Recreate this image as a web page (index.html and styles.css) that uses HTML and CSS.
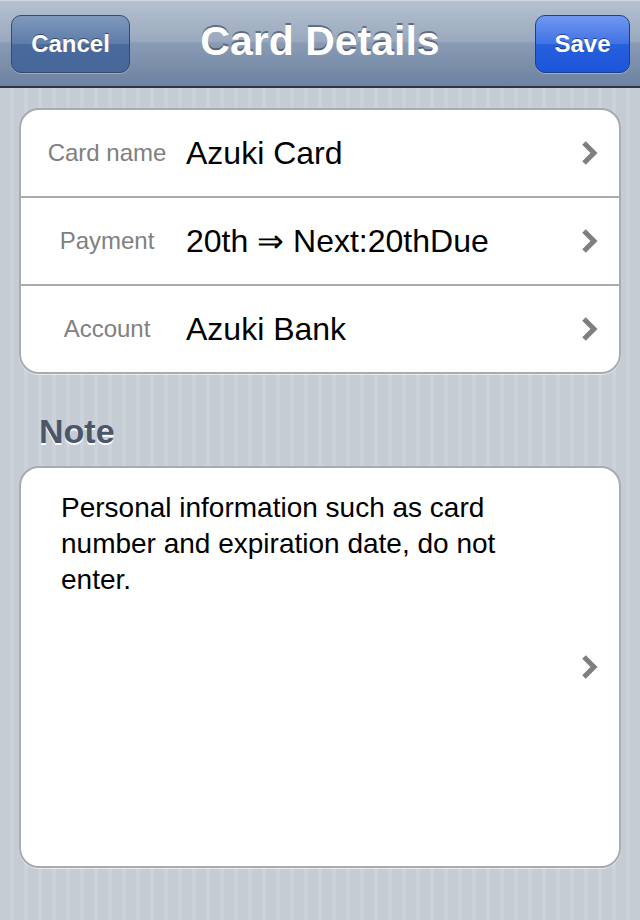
FILE: index.html
```html
<!DOCTYPE html>
<html>
<head>
<meta charset="utf-8">
<link rel="stylesheet" href="styles.css">
</head>
<body>
<div class="screen">
  <header class="navbar">
    <button class="btn btn-cancel">Cancel</button>
    <h1 class="title">Card Details</h1>
    <button class="btn btn-save">Save</button>
  </header>
  <main class="content">
    <section class="group">
      <div class="row">
        <span class="label">Card name</span>
        <span class="value">Azuki Card</span>
        <svg class="chev" viewBox="0 0 18 26" width="18" height="26"><path d="M3 3 L13 13 L3 23" fill="none" stroke="#7f7f7f" stroke-width="5"/></svg>
      </div>
      <div class="row">
        <span class="label">Payment</span>
        <span class="value">20th ⇒ Next:20thDue</span>
        <svg class="chev" viewBox="0 0 18 26" width="18" height="26"><path d="M3 3 L13 13 L3 23" fill="none" stroke="#7f7f7f" stroke-width="5"/></svg>
      </div>
      <div class="row">
        <span class="label">Account</span>
        <span class="value">Azuki Bank</span>
        <svg class="chev" viewBox="0 0 18 26" width="18" height="26"><path d="M3 3 L13 13 L3 23" fill="none" stroke="#7f7f7f" stroke-width="5"/></svg>
      </div>
    </section>
    <h2 class="section-title">Note</h2>
    <section class="group note">
      <p class="note-text">Personal information such as card number and expiration date, do not enter.</p>
      <svg class="chev" viewBox="0 0 18 26" width="18" height="26"><path d="M3 3 L13 13 L3 23" fill="none" stroke="#7f7f7f" stroke-width="5"/></svg>
    </section>
  </main>
</div>
</body>
</html>
```
FILE: styles.css
```css
html, body {
  margin: 0;
  padding: 0;
}
body {
  width: 640px;
  height: 920px;
  overflow: hidden;
  font-family: "Liberation Sans", Arial, sans-serif;
  background: repeating-linear-gradient(90deg, #c5ccd4 0 10px, #cbd2d9 10px 14px);
}
.screen {
  display: flex;
  flex-direction: column;
}
.navbar {
  height: 86px;
  border-bottom: 2px solid #2d3542;
  background: linear-gradient(#b5c1d0 0%, #9aa9bf 48%, #8a9bb4 50%, #6c82a1 100%);
  box-shadow: inset 0 1px 0 #d0d8e2;
  display: flex;
  align-items: center;
  justify-content: space-between;
  padding: 0 10px 0 11px;
  position: relative;
}
.btn {
  height: 58px;
  margin-top: 1px;
  border-radius: 10px;
  font-family: "Liberation Sans", Arial, sans-serif;
  font-weight: bold;
  font-size: 24px;
  color: #fff;
  text-shadow: 0 -1px 0 rgba(0,0,0,0.45);
  padding: 0;
}
.btn-cancel {
  width: 119px;
  border: 1px solid #374a66;
  background: linear-gradient(#7f99bd 0%, #5d7ca8 50%, #4a6a9c 51%, #46679a 100%);
  box-shadow: 0 1px 0 rgba(255,255,255,0.3);
}
.btn-save {
  width: 95px;
  border: 1px solid #1f3f8e;
  background: linear-gradient(#7098ef 0%, #3f72e4 50%, #2660dd 51%, #1c55da 100%);
  box-shadow: 0 1px 0 rgba(255,255,255,0.3);
}
.title {
  position: absolute;
  left: 0;
  right: 0;
  top: 0;
  height: 86px;
  line-height: 82px;
  margin: 0;
  text-align: center;
  font-size: 41px;
  font-weight: bold;
  color: #fff;
  text-shadow: 0 -2px 0 rgba(40,50,70,0.55);
  pointer-events: none;
}
.content {
  padding: 20px 19px 0 19px;
  display: flex;
  flex-direction: column;
}
.group {
  background: #fff;
  border: 2px solid #a9abae;
  border-radius: 20px;
  box-shadow: 0 1px 0 rgba(255,255,255,0.6);
}
.row {
  height: 86px;
  display: flex;
  align-items: center;
  border-top: 2px solid #acacac;
}
.row:first-child {
  border-top: none;
  height: 86px;
}
.label {
  width: 142px;
  margin-left: 15px;
  text-align: center;
  font-size: 24px;
  color: #808080;
  flex: none;
}
.value {
  margin-left: 8px;
  font-size: 32px;
  color: #000;
  flex: 1;
}
.chev {
  flex: none;
  margin-right: 20px;
}
.section-title {
  margin: 38px 0 0 20px;
  height: 54px;
  font-size: 34px;
  font-weight: bold;
  color: #4c566b;
  text-shadow: 0 2px 0 #fff;
}
.note {
  height: 398px;
  position: relative;
  display: flex;
  align-items: center;
}
.note-text {
  position: absolute;
  top: 22px;
  left: 40px;
  right: 96px;
  margin: 0;
  font-size: 28px;
  line-height: 36px;
  color: #000;
}
.note .chev {
  margin-left: auto;
}
```
